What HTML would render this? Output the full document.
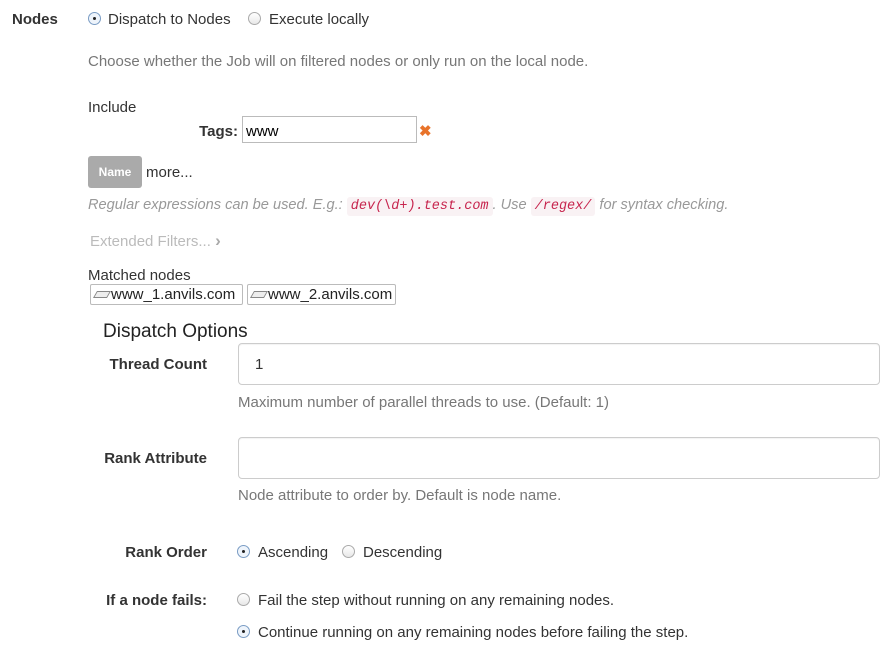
<!DOCTYPE html>
<html><head><style>
body{margin:0;width:887px;height:645px;background:#fff;font-family:"Liberation Sans",Helvetica,Arial,sans-serif;font-size:15px;color:#333;position:relative;overflow:hidden}
.a{position:absolute;white-space:nowrap;line-height:24px}
.b{font-weight:bold}
.rt{text-align:right}
.r{position:absolute;width:11px;height:11px;border:1px solid #aaa;border-radius:50%;background:linear-gradient(#fff,#e8e8e8)}
.r.on{border-color:#7a9cc4;background:#eef4fb}
.r.on::after{content:"";position:absolute;left:4px;top:4px;width:3px;height:3px;border-radius:50%;background:#222}
.g{color:#777}
.inp{position:absolute;border:1px solid #ccc;border-radius:4px;box-shadow:inset 0 1px 1px rgba(0,0,0,.05)}
code{font-family:"Liberation Mono",monospace;font-style:italic;color:#c7254e;background:#f9f2f4;padding:2px 4px;border-radius:3px;font-size:13.5px}
.node{position:absolute;border:1px solid #bbb;border-radius:2px;height:19px;line-height:19px;padding-left:20px;font-size:15px;color:#222}
.node::before{content:"";position:absolute;left:4px;top:6px;width:12px;height:5px;border:1px solid #888;background:#eee;transform:skewX(-30deg)}
</style></head><body>
<div class="a b" style="left:12px;top:8px">Nodes</div>
<div class="r on" style="left:88px;top:12px"></div>
<div class="a" style="left:108px;top:8px">Dispatch to Nodes</div>
<div class="r" style="left:248px;top:12px"></div>
<div class="a" style="left:269px;top:8px">Execute locally</div>
<div class="a g" style="left:88px;top:50px">Choose whether the Job will on filtered nodes or only run on the local node.</div>
<div class="a" style="left:88px;top:96px">Include</div>
<div class="a b rt" style="left:138px;width:100px;top:120px">Tags:</div>
<div style="position:absolute;left:242px;top:116px;width:173px;height:25px;border:1px solid #bbb"></div>
<div class="a" style="left:246px;top:120px;color:#000">www</div>
<div class="a b" style="left:419px;top:120px;color:#e8732a;font-size:15px">✖</div>
<div style="position:absolute;left:88px;top:156px;width:54px;height:32px;background:#aaa;border-radius:3px;color:#fff;font-weight:bold;font-size:12px;line-height:32px;text-align:center">Name</div>
<div class="a" style="left:146px;top:161px">more...</div>
<div class="a" style="left:88px;top:193px;color:#999;font-style:italic;font-size:14.6px">Regular expressions can be used. E.g.: <code>dev(\d+).test.com</code>. Use <code>/regex/</code> for syntax checking.</div>
<div class="a" style="left:90px;top:229px;color:#bbb">Extended Filters... <b style="color:#aaa;font-size:17px">›</b></div>
<div class="a" style="left:88px;top:264px">Matched nodes</div>
<div class="node" style="left:90px;top:284px;width:131px">www_1.anvils.com</div>
<div class="node" style="left:247px;top:284px;width:127px">www_2.anvils.com</div>
<div class="a" style="left:103px;top:320px;font-size:19px;line-height:24px;color:#222">Dispatch Options</div>
<div class="a b rt" style="left:60px;width:147px;top:353px">Thread Count</div>
<div class="inp" style="left:238px;top:343px;width:640px;height:40px"></div>
<div class="a" style="left:255px;top:353px;color:#333">1</div>
<div class="a g" style="left:238px;top:391px">Maximum number of parallel threads to use. (Default: 1)</div>
<div class="a b rt" style="left:60px;width:147px;top:447px">Rank Attribute</div>
<div class="inp" style="left:238px;top:437px;width:640px;height:40px"></div>
<div class="a g" style="left:238px;top:484px">Node attribute to order by. Default is node name.</div>
<div class="a b rt" style="left:60px;width:147px;top:541px">Rank Order</div>
<div class="r on" style="left:237px;top:545px"></div>
<div class="a" style="left:258px;top:541px">Ascending</div>
<div class="r" style="left:342px;top:545px"></div>
<div class="a" style="left:363px;top:541px">Descending</div>
<div class="a b rt" style="left:60px;width:147px;top:589px">If a node fails:</div>
<div class="r" style="left:237px;top:593px"></div>
<div class="a" style="left:258px;top:589px">Fail the step without running on any remaining nodes.</div>
<div class="r on" style="left:237px;top:625px"></div>
<div class="a" style="left:258px;top:621px">Continue running on any remaining nodes before failing the step.</div>
</body></html>
